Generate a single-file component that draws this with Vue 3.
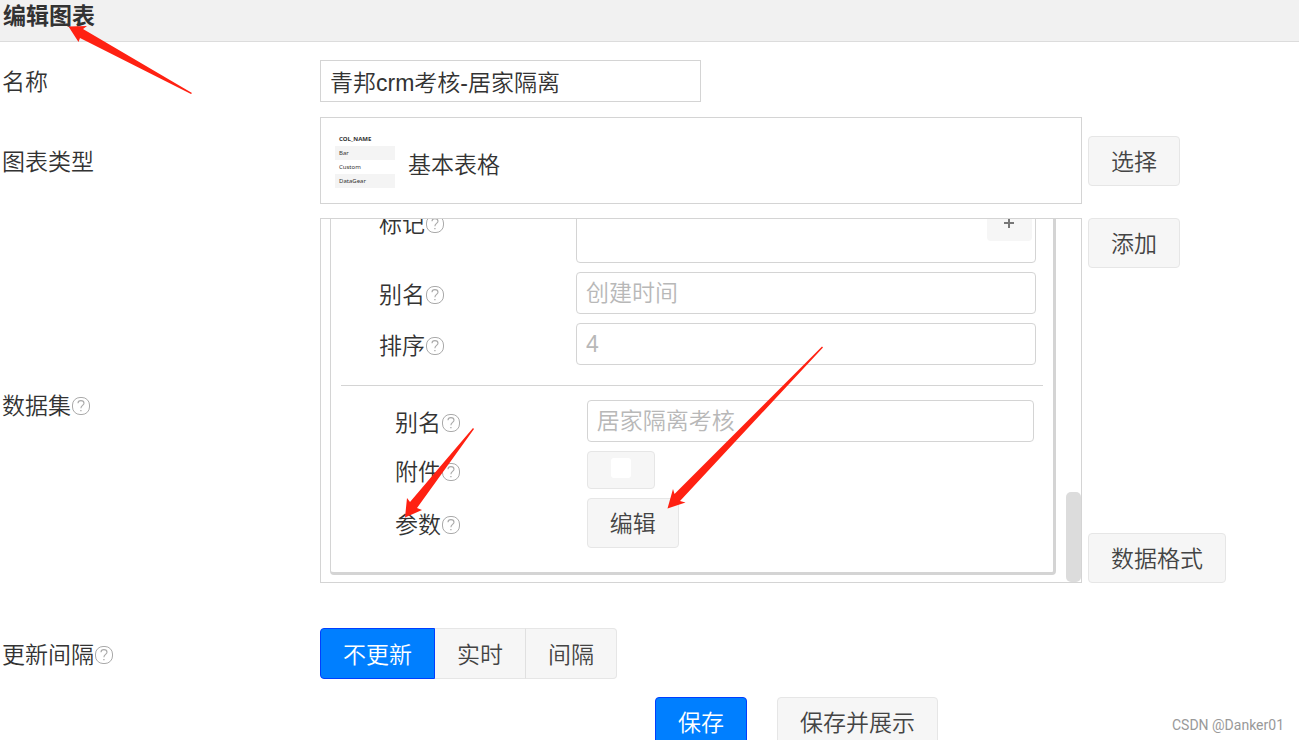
<script setup>
import { ref, h } from 'vue'

const name = ref('青邦crm考核-居家隔离')
const updateMode = ref('none')
const attachment = ref(false)

const modes = [
  { value: 'none', label: '不更新' },
  { value: 'realtime', label: '实时' },
  { value: 'interval', label: '间隔' },
]
const previewRows = ['Bar', 'Custom', 'DataGear']

const HelpIcon = () =>
  h('svg', { width: 20, height: 20, viewBox: '0 0 20 20', fill: 'none', stroke: '#aaa', 'aria-hidden': 'true' }, [
    h('rect', { x: 1.5, y: 1.5, width: 17, height: 17, rx: 7.5 }),
    h('path', { d: 'M7 7.2C7 5.5 8.2 4.6 9.9 4.6C11.7 4.6 13 5.6 13 7.2C13 9.3 9.9 9.6 9.9 12.2', 'stroke-width': 1.1 }),
    h('path', { d: 'M9.9 14V15.3', 'stroke-width': 1.3 }),
  ])
</script>

<template>
  <main class="page">
    <header class="title-bar"><h1>编辑图表</h1></header>

    <form class="form" @submit.prevent>
      <div class="row name-row">
        <label class="label" for="name">名称</label>
        <div class="field"><input id="name" v-model="name" class="name-input" type="text" /></div>
      </div>

      <div class="row">
        <span class="label">图表类型</span>
        <div class="field type-box">
          <table class="preview">
            <thead><tr><th>COL_NAME</th></tr></thead>
            <tbody>
              <tr v-for="item in previewRows" :key="item"><td>{{ item }}</td></tr>
            </tbody>
          </table>
          <span>基本表格</span>
        </div>
        <div class="side"><button type="button" class="btn">选择</button></div>
      </div>

      <div class="row">
        <span class="label dataset-label">数据集<HelpIcon /></span>
        <div class="field dataset-box">
          <div class="card">
            <div class="props">
              <div class="prop">
                <span class="prop-label">标记<HelpIcon /></span>
                <div class="tags">
                  <button type="button" class="plus" aria-label="添加标记">
                    <svg width="12" height="12" viewBox="0 0 12 12" aria-hidden="true">
                      <path d="M6 1V11M1 6H11" stroke="#777" stroke-width="2" />
                    </svg>
                  </button>
                </div>
              </div>
              <div class="prop">
                <label class="prop-label" for="col-alias">别名<HelpIcon /></label>
                <input id="col-alias" type="text" placeholder="创建时间" />
              </div>
              <div class="prop">
                <label class="prop-label" for="col-order">排序<HelpIcon /></label>
                <input id="col-order" type="text" placeholder="4" />
              </div>
            </div>
            <div class="props set-props">
              <div class="prop">
                <label class="prop-label" for="set-alias">别名<HelpIcon /></label>
                <input id="set-alias" type="text" placeholder="居家隔离考核" />
              </div>
              <div class="prop">
                <label class="prop-label" for="attachment">附件<HelpIcon /></label>
                <span class="check"><input id="attachment" v-model="attachment" type="checkbox" /></span>
              </div>
              <div class="prop">
                <span class="prop-label">参数<HelpIcon /></span>
                <button type="button" class="btn">编辑</button>
              </div>
            </div>
          </div>
          <div class="thumb"></div>
        </div>
        <div class="side side-spread">
          <button type="button" class="btn">添加</button>
          <button type="button" class="btn">数据格式</button>
        </div>
      </div>

      <div class="row update-row">
        <span class="label">更新间隔<HelpIcon /></span>
        <div class="modes">
          <button
            v-for="mode in modes"
            :key="mode.value"
            type="button"
            class="btn"
            :class="{ primary: mode.value === updateMode }"
            @click="updateMode = mode.value"
          >{{ mode.label }}</button>
        </div>
      </div>

      <div class="actions">
        <button type="submit" class="btn primary">保存</button>
        <button type="button" class="btn">保存并展示</button>
      </div>
    </form>

    <svg class="arrows" width="1299" height="740" viewBox="0 0 1299 740" fill="#ff2112" aria-hidden="true">
      <path d="M68.5 26.5L87 26L83 29L192 93L191 94L80 38L78.5 42Z" />
      <path d="M405 517.5L407 498L410 502L473 428L474 429L417 508L422 510Z" />
      <path d="M667.5 508.5L673 489L674.5 494L822 346.5L823 347.5L680 501L685.5 502.5Z" />
    </svg>
    <span class="watermark">CSDN @Danker01</span>
  </main>
</template>

<style>
body {
  background: #fff;
}
</style>

<style scoped>
.page,
.page * {
  box-sizing: border-box;
}
.page {
  position: relative;
  height: 100vh;
  overflow: hidden;
  color: #333;
  font-family: "Liberation Sans", "Noto Sans CJK SC", sans-serif;
  font-size: 23px;
  font-weight: 350;
  line-height: 32px;
}
.title-bar {
  height: 42px;
  padding: 0 3px;
  background: #f1f1f1;
  border-bottom: 1px solid #dcdcdc;
}
h1 {
  margin: 0;
  font-size: 23px;
  line-height: 32px;
}
button,
input {
  font: inherit;
  color: inherit;
}
.form {
  display: flex;
  flex-direction: column;
  gap: 14px;
  padding-top: 18px;
}
.row {
  display: grid;
  grid-template-columns: 320fr 762fr 217fr;
  align-items: center;
}
.name-row {
  padding-bottom: 1px;
}
.label,
.prop-label {
  display: flex;
  align-items: center;
}
.label {
  padding: 2px 0 0 2px;
}
.prop-label {
  padding-top: 3px;
}
.dataset-label {
  padding-top: 10px;
}
input[type="text"] {
  display: block;
  width: 100%;
  height: 42px;
  padding: 0 9px;
  background: #fff;
  border: 1px solid #d4d4d4;
  border-radius: 4px;
  outline: none;
}
input.name-input[type="text"] {
  width: 50%;
  border-radius: 0;
}
input::placeholder {
  color: #b8b8b8;
  opacity: 1;
}
.type-box {
  display: flex;
  align-items: center;
  gap: 13px;
  height: 87px;
  padding: 8px 14px 0;
  border: 1px solid #d4d4d4;
}
.preview {
  width: 60px;
  margin-bottom: 10px;
  border-collapse: collapse;
  font-family: "Noto Sans", sans-serif;
  font-size: 6px;
  font-weight: 400;
  line-height: 14px;
}
.preview th,
.preview td {
  height: 14px;
  padding: 0 4px;
  text-align: left;
}
.preview tbody tr:nth-child(odd) {
  background: #f4f4f4;
}
.btn {
  height: 50px;
  padding: 2px 22px 0;
  color: #444;
  background: #f6f6f6;
  border: 1px solid #e6e6e6;
  border-radius: 4px;
  white-space: nowrap;
}
.btn.primary {
  color: #fff;
  background: #007fff;
  border-color: #003eff;
}
.side {
  padding-left: 6px;
}
.side-spread {
  display: flex;
  flex-direction: column;
  justify-content: space-between;
  align-items: flex-start;
  align-self: stretch;
}
.dataset-box {
  position: relative;
  display: flex;
  flex-direction: column;
  justify-content: flex-end;
  height: 365px;
  padding: 0 25px 7px 9px;
  overflow: hidden;
  border: 1px solid #d4d4d4;
}
.card {
  flex: none;
  padding: 0 10px 24px;
  border: 1px solid #d4d4d4;
  border-right-width: 3px;
  border-bottom-width: 3px;
  border-radius: 4px;
}
.props {
  display: flex;
  flex-direction: column;
  gap: 9px;
  padding: 0 7px 20px 38px;
  border-bottom: 1px solid #d4d4d4;
}
.set-props {
  padding: 14px 9px 0 54px;
  border-bottom: 0;
}
.prop {
  display: grid;
  grid-template-columns: 30% 70%;
  align-items: center;
  justify-items: start;
}
.tags {
  display: flex;
  justify-content: flex-end;
  align-items: flex-start;
  width: 100%;
  height: 82px;
  padding: 23px 3px 0;
  border: 1px solid #d4d4d4;
  border-radius: 4px;
}
.plus {
  display: flex;
  align-items: center;
  justify-content: center;
  width: 45px;
  height: 36px;
  padding: 0;
  background: #f6f6f6;
  border: 0;
  border-radius: 4px;
}
.check {
  display: flex;
  justify-content: center;
  width: 68px;
  height: 38px;
  padding-top: 6px;
  background: #f6f6f6;
  border: 1px solid #e6e6e6;
  border-radius: 4px;
}
.check input {
  width: 20px;
  height: 20px;
  margin: 0;
  appearance: none;
  background: #fff;
  border-radius: 3px;
}
.check input:checked {
  background: #007fff;
}
.thumb {
  position: absolute;
  right: 0;
  bottom: 0;
  width: 15px;
  height: 90px;
  background: #dcdcdc;
  border-radius: 5px;
}
.update-row {
  margin-top: 31px;
}
.modes {
  display: flex;
}
.modes .btn {
  height: 51px;
  border-radius: 0;
}
.modes .btn + .btn {
  border-left-width: 0;
}
.modes .btn:nth-child(2) {
  border-right-color: #e0e0e0;
}
.modes .btn:first-child {
  border-radius: 4px 0 0 4px;
}
.modes .btn:last-child {
  border-radius: 0 4px 4px 0;
}
.actions {
  display: flex;
  justify-content: center;
  gap: 30px;
  margin-top: 4px;
  padding-left: 294px;
}
.arrows {
  position: absolute;
  top: 0;
  left: 0;
  pointer-events: none;
}
.watermark {
  position: absolute;
  right: 15px;
  bottom: 5px;
  color: #999;
  font-family: Roboto, sans-serif;
  font-size: 14px;
  font-weight: 400;
  line-height: 20px;
}
</style>
